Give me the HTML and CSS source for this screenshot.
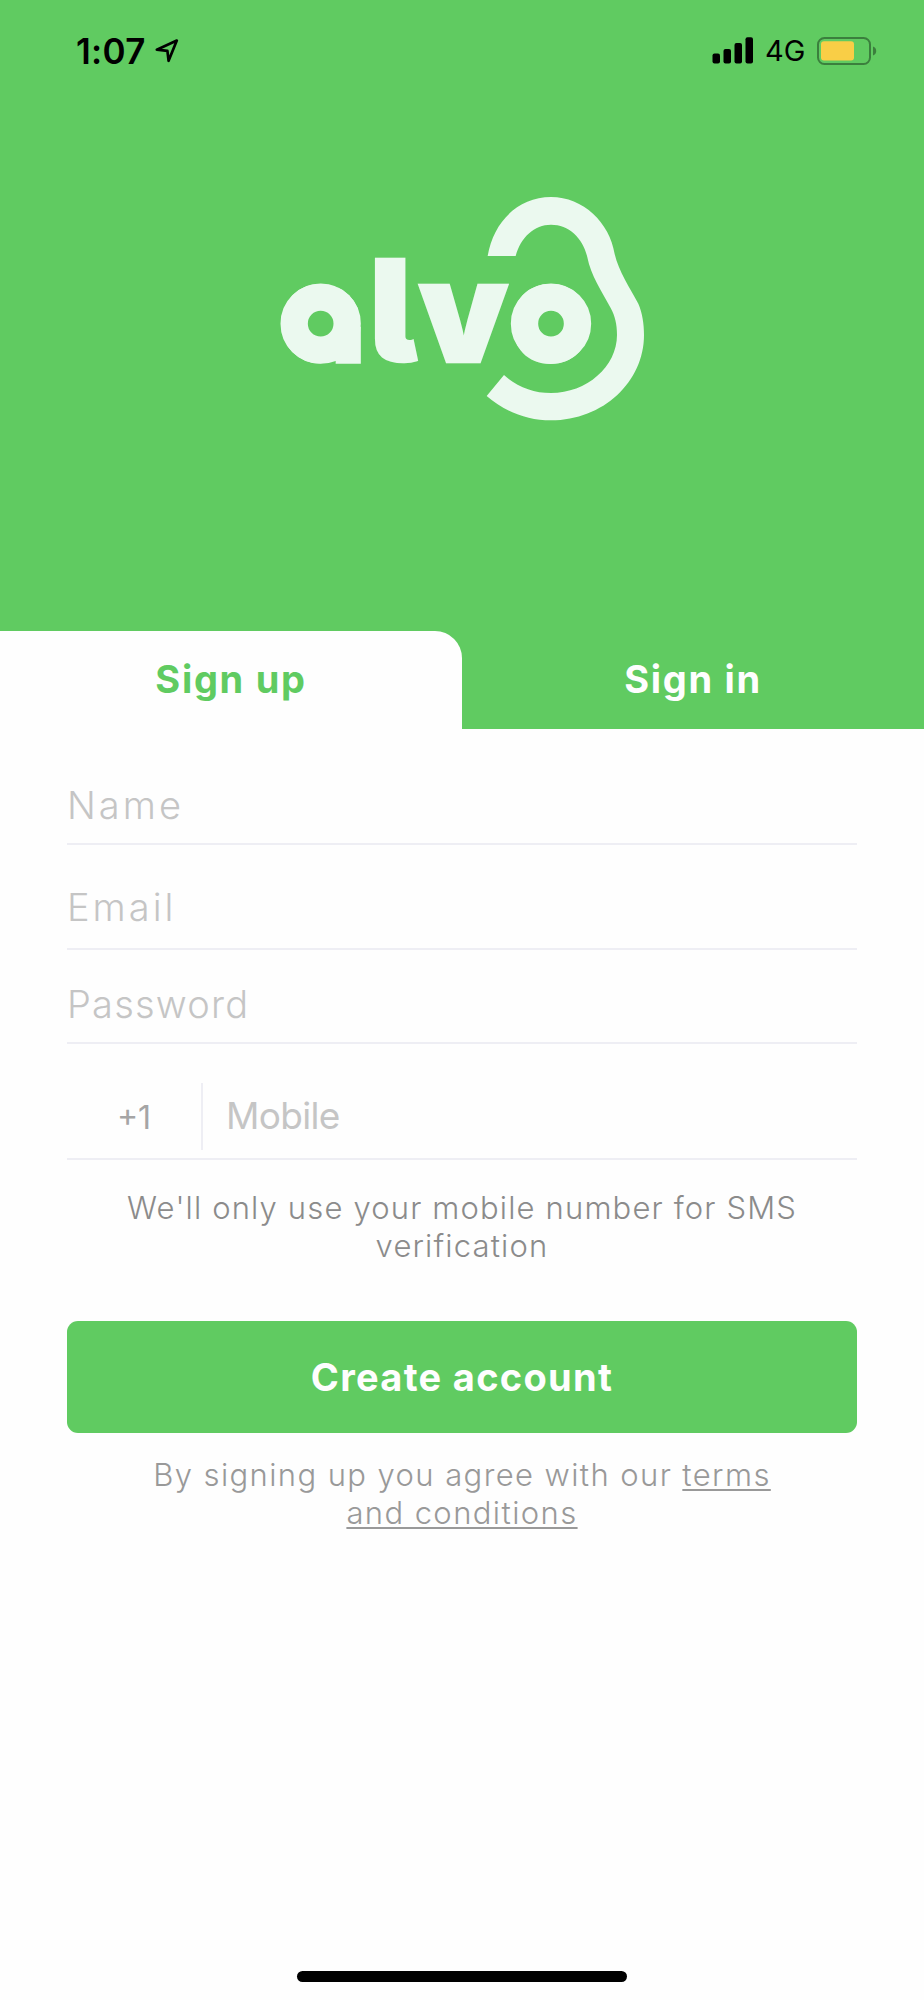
FILE: index.html
```html
<!DOCTYPE html>
<html lang="en">
<head>
    <meta charset="UTF-8">
    <meta name="viewport" content="width=device-width, initial-scale=1.0">
    <title>Sign up - alvo</title>
    <link rel="stylesheet" href="styles.css">
</head>
<body>

    <header class="header">
        <!-- Status bar -->
        <div class="status-bar">
            <span class="time">1:07</span>
            <svg class="location" width="26" height="26" viewBox="0 0 26 26">
                <path d="M2.8 11.7 L22.8 2.6 L14.6 22.8 L13.4 12.9 Z" fill="none" stroke="#000" stroke-width="2.7" stroke-linejoin="round"/>
            </svg>
            <svg class="signal" width="42" height="27" viewBox="0 0 42 27">
                <rect x="0.5" y="16.5" width="7.5" height="10" rx="2"/>
                <rect x="11.5" y="12" width="7.5" height="14.5" rx="2"/>
                <rect x="22.5" y="6" width="7.5" height="20.5" rx="2"/>
                <rect x="33.5" y="0.3" width="7.5" height="26.2" rx="2"/>
            </svg>
            <span class="network">4G</span>
            <svg class="battery" width="60" height="28" viewBox="0 0 60 28">
                <rect x="1" y="1" width="52" height="26" rx="6.5" fill="none" stroke="#3b7f3d" stroke-width="2"/>
                <rect x="4" y="4.3" width="33" height="19.2" rx="3" fill="#f9ce46"/>
                <path d="M56 9.5 C60.3 11 60.3 17 56 18.5 Z" fill="#3b7f3d"/>
            </svg>
        </div>

        <!-- Logo -->
        <svg class="logo" width="390" height="250" viewBox="0 0 1170 750">
            <clipPath id="bowl">
                <circle cx="152" cy="431" r="120.5"/>
                <rect x="152" y="431" width="120.5" height="120.5"/>
            </clipPath>
            <g clip-path="url(#bowl)">
                <text class="logo-text round" x="24" y="550">a</text>
                <rect x="197" y="440" width="76" height="112"/>
            </g>
            <text class="logo-text" y="547"><tspan x="298">l</tspan><tspan x="446">v</tspan><tspan class="round" x="712">o</tspan></text>
            <circle class="logo-ring" cx="152" cy="431" r="79.5"/>
            <circle class="logo-ring" cx="843" cy="431" r="79.5"/>
            <path d="M653 228 C670 125 745 51 843 51 C940 51 1019 128 1034 222 C1046 273 1080 325 1105 371 C1117 398 1122 432 1122 465 C1122 605 1000 721 843 721 C770 721 700 692 650 648 L702 585 C740 620 790 639 843 639 C950 639 1041 560 1041 465 C1041 432 1035 408 1022 384 C995 335 962 285 952 232 C940 175 897 134 843 134 C793 134 752 172 737 228 Z"/>
        </svg>

        <!-- Tabs -->
        <nav class="tabs">
            <a class="tab active">Sign up</a>
            <a class="tab">Sign in</a>
        </nav>
    </header>

    <form class="signup-form">
        <input class="field field-name" type="text" placeholder="Name">
        <input class="field field-email" type="text" placeholder="Email">
        <input class="field field-password" type="password" placeholder="Password">
        <div class="phone-row">
            <span class="country-code">+1</span>
            <input class="phone" type="tel" placeholder="Mobile">
        </div>
        <p class="note">We'll only use your mobile number for SMS<br>verification</p>
        <button class="submit" type="button">Create account</button>
        <p class="terms">By signing up you agree with our <a>terms<br>and conditions</a></p>
    </form>

    <div class="home-indicator"></div>

</body>
</html>
```
FILE: styles.css
```css
* {
    box-sizing: border-box;
}

body {
    margin: 0;
    height: 2000px;
    display: flex;
    flex-direction: column;
    background-color: #fefefe;
    font-family: 'Inter', sans-serif;
    overflow: hidden;
}

/* Green header */
.header {
    height: 729px;
    display: flex;
    flex-direction: column;
    background-color: #60cb61;
}

.status-bar {
    height: 101px;
    padding: 0 47px 0 76px;
    display: flex;
    align-items: center;
}

.time {
    width: 78px;
    font-size: 35px;
    font-weight: 600;
    letter-spacing: 0.3px;
}

.signal {
    margin-left: auto;
}

.network {
    width: 63px;
    padding-left: 11px;
    font-size: 29px;
}

.logo {
    margin: 79px 0 0 270px;
    fill: #ebf9ef;
}

.logo-text {
    font-size: 424px;
    font-weight: 900;
    font-feature-settings: 'cv11', 'cv05';
    stroke: #ebf9ef;
    stroke-width: 8px;
}

.logo .round {
    font-weight: 700;
    stroke: none;
}

.logo-ring {
    fill: none;
    stroke: #ebf9ef;
    stroke-width: 82px;
}

/* Tabs */
.tabs {
    margin-top: auto;
    display: flex;
    height: 98px;
}

.tab {
    flex: 1;
    line-height: 97px;
    text-align: center;
    color: #fefefe;
    font-size: 38px;
    font-weight: 700;
    letter-spacing: 1.7px;
}

.tab.active {
    background-color: #fefefe;
    color: #60cb61;
    border-top-right-radius: 27px;
}

/* Form */
.signup-form {
    padding: 40px 67px 0;
    display: flex;
    flex-direction: column;
}

input {
    border: none;
    outline: none;
    background: none;
    border-radius: 0;
    font-family: inherit;
    font-size: 37px;
}

input::placeholder {
    color: #c5c5c5;
}

.field {
    height: 76px;
    padding: 0 0 2px;
    border-bottom: 2px solid #eeeef4;
    font-size: 38px;
    font-weight: 300;
}

.field-name {
    letter-spacing: 3px;
}

.field-email {
    height: 85px;
    margin-top: 20px;
    padding: 0;
    letter-spacing: 3px;
}

.field-password {
    margin-top: 18px;
    letter-spacing: 1.2px;
}

.phone-row {
    height: 77px;
    margin-top: 39px;
    padding-bottom: 8px;
    display: flex;
    border-bottom: 2px solid #eeeef4;
}

.country-code {
    width: 136px;
    border-right: 2px solid #eeeef4;
    line-height: 69px;
    text-align: center;
    font-size: 32px;
    color: #a5a5a5;
}

.phone {
    flex: 1;
    padding: 0 0 2px 23px;
    letter-spacing: -0.7px;
}

.note,
.terms {
    margin: 29px 0 0;
    line-height: 38px;
    text-align: center;
    font-size: 31px;
    font-weight: 300;
    letter-spacing: 1.15px;
    color: #8b8b8b;
}

.submit {
    height: 112px;
    margin-top: 56px;
    border: none;
    border-radius: 11px;
    background-color: #60cb61;
    color: #fefefe;
    font-family: inherit;
    font-size: 38px;
    font-weight: 700;
    letter-spacing: 1.3px;
}

.terms {
    margin-top: 23px;
    letter-spacing: 1.4px;
    color: #999;
}

.terms a {
    text-decoration: underline;
    text-decoration-thickness: 2px;
    text-underline-offset: 3px;
}

.home-indicator {
    width: 330px;
    height: 11px;
    margin: auto auto 18px;
    border-radius: 6px;
    background-color: #000;
}
```
